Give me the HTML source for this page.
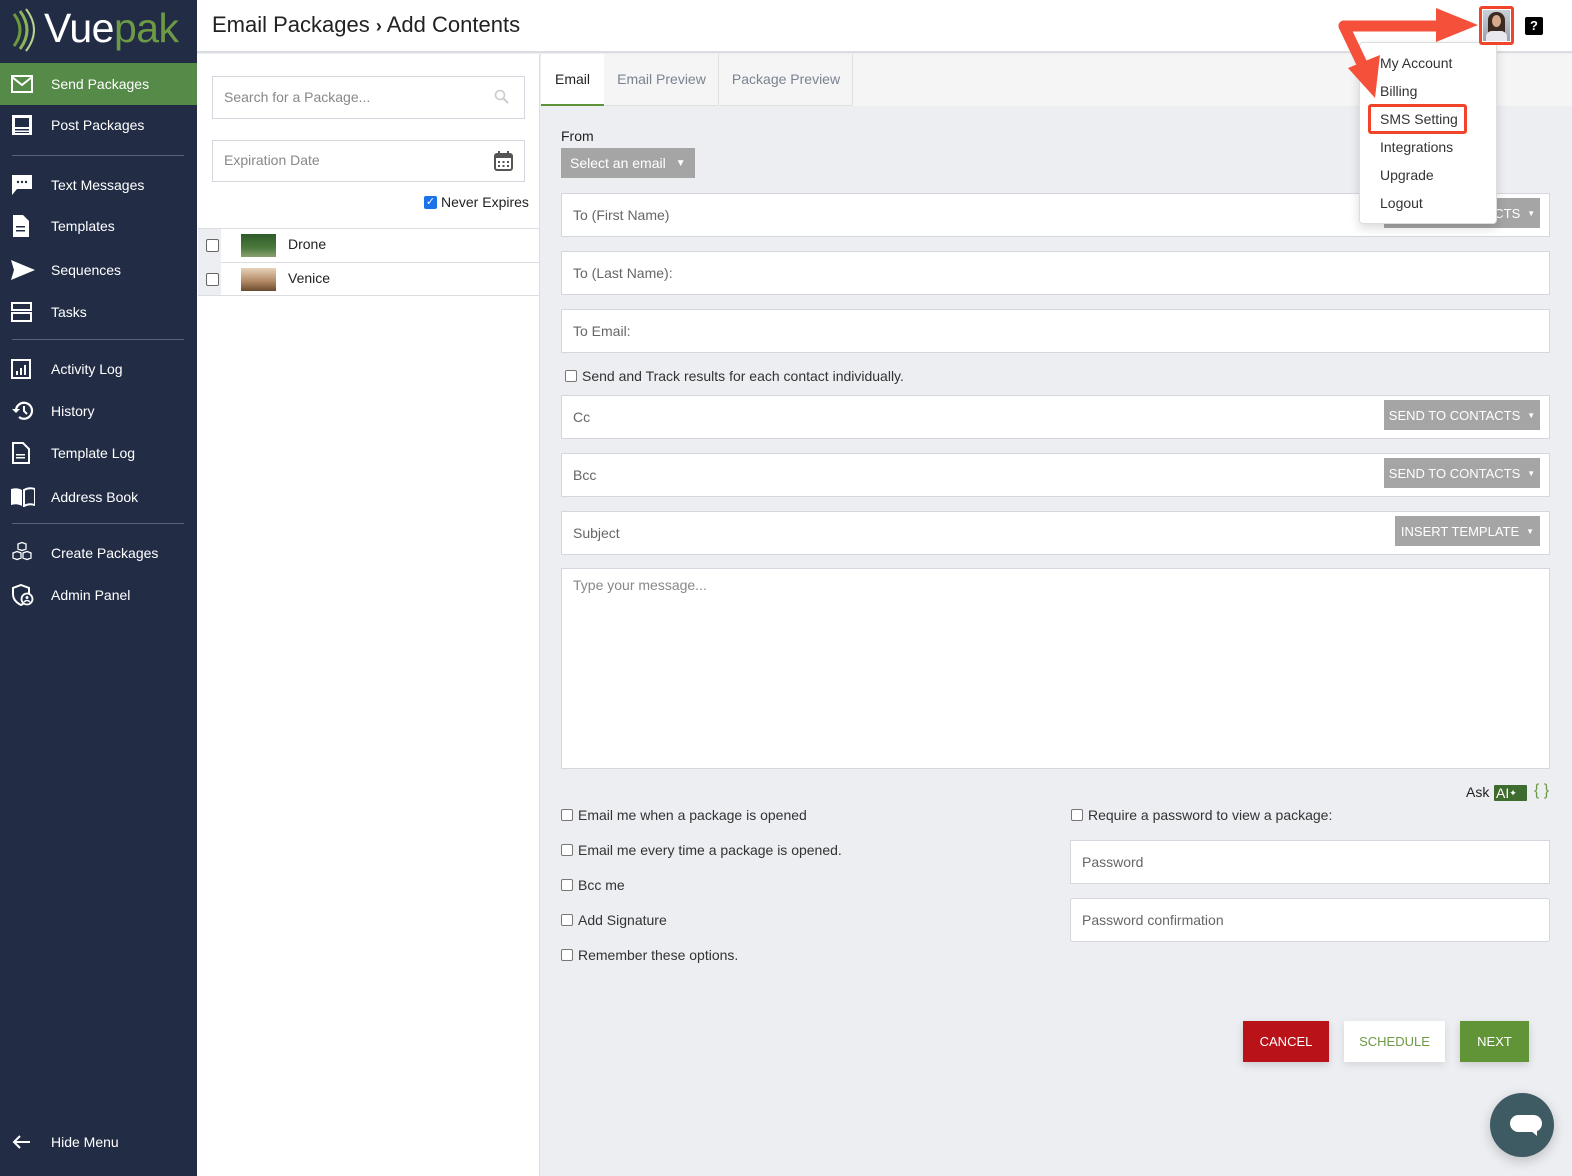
<!DOCTYPE html>
<html><head><meta charset="utf-8">
<style>
*{box-sizing:border-box;margin:0;padding:0}
body{width:1572px;height:1176px;overflow:hidden;font-family:"Liberation Sans",sans-serif;background:#eceef2;position:relative;color:#333;font-size:14px}
.abs{position:absolute}
#side{left:0;top:0;width:197px;height:1176px;background:#222d45;color:#fff}
.nav{position:absolute;left:0;width:197px;height:42px;display:flex;align-items:center;font-size:14px}
.nav span.t{position:absolute;left:51px}
.nav svg{position:absolute;left:11px}
.hr{position:absolute;left:12px;width:172px;height:1px;background:#59637a}
.field{position:absolute;left:561px;width:989px;height:44px;background:#fff;border:1px solid #d4d7dd;color:#666;font-size:14px;padding:0 11px;display:flex;align-items:center}
.gbtn{position:absolute;background:#a5a5a5;color:#fff;font-size:13px;display:flex;align-items:center;justify-content:center;height:30px}
.cb{display:inline-block;width:12px;height:12px;border:1px solid #777;border-radius:2px;background:#fff;vertical-align:-1px;margin-right:5px}
.opt{position:absolute;font-size:14px;color:#333}
.dd{position:absolute;left:1380px;font-size:14px;color:#333}
</style></head><body>
<div id="side" class="abs">
 <svg class="abs" style="left:10px;top:8px" width="30" height="44" viewBox="0 0 30 44"><path d="M4 6 Q16 22 4 38" stroke="#6c9a3c" stroke-width="3" fill="none"/><path d="M10 3 Q24 22 10 41" stroke="#8ab458" stroke-width="3" fill="none"/><path d="M16 1 Q32 22 16 43" stroke="#b8d190" stroke-width="2" fill="none"/></svg>
 <div class="abs" style="left:44px;top:4px;font-size:41px;line-height:48px;letter-spacing:-0.5px"><span style="color:#fff">Vue</span><span style="color:#6d9a45">pak</span></div>
 <div class="nav" style="top:63px;background:#568a48"><svg width="22" height="18" viewBox="0 0 22 18"><rect x="1" y="1" width="20" height="16" fill="none" stroke="#fff" stroke-width="2"/><path d="M1 2 L11 10 L21 2" stroke="#fff" stroke-width="2" fill="none"/></svg><span class="t">Send Packages</span></div>
 <div class="nav" style="top:104px"><svg width="22" height="22" viewBox="0 0 22 22"><rect x="1" y="1" width="20" height="20" fill="#fff"/><rect x="4" y="4" width="14" height="9" fill="#222d45"/><rect x="4" y="15" width="14" height="1.5" fill="#222d45"/><rect x="4" y="18" width="14" height="1" fill="#222d45"/></svg><span class="t">Post Packages</span></div>
 <div class="hr" style="top:155px"></div>
 <div class="nav" style="top:164px"><svg width="22" height="22" viewBox="0 0 22 22"><path d="M1 1 H21 V15 H6 L1 21 Z" fill="#fff"/><circle cx="7" cy="8" r="1.2" fill="#222d45"/><circle cx="11" cy="8" r="1.2" fill="#222d45"/><circle cx="15" cy="8" r="1.2" fill="#222d45"/></svg><span class="t">Text Messages</span></div>
 <div class="nav" style="top:205px"><svg width="22" height="22" viewBox="0 0 22 22"><path d="M2 0 H12 L18 6 V22 H2 Z" fill="#fff"/><rect x="5" y="11" width="9" height="1.5" fill="#222d45"/><rect x="5" y="15" width="9" height="1.5" fill="#222d45"/></svg><span class="t">Templates</span></div>
 <div class="nav" style="top:249px"><svg width="24" height="20" viewBox="0 0 24 20"><path d="M0 0 L24 10 L0 20 L3 10 Z" fill="#fff"/></svg><span class="t">Sequences</span></div>
 <div class="nav" style="top:291px"><svg width="22" height="20" viewBox="0 0 22 20"><rect x="1" y="1" width="19" height="7" fill="none" stroke="#fff" stroke-width="2"/><rect x="1" y="11" width="19" height="8" fill="none" stroke="#fff" stroke-width="2"/></svg><span class="t">Tasks</span></div>
 <div class="hr" style="top:339px"></div>
 <div class="nav" style="top:348px"><svg width="22" height="20" viewBox="0 0 22 20"><rect x="1" y="1" width="18" height="18" fill="none" stroke="#fff" stroke-width="2"/><rect x="5" y="12" width="2" height="4" fill="#fff"/><rect x="9" y="9" width="2" height="7" fill="#fff"/><rect x="13" y="6" width="2" height="10" fill="#fff"/></svg><span class="t">Activity Log</span></div>
 <div class="nav" style="top:390px"><svg width="24" height="22" viewBox="0 0 24 22"><path d="M5 11 A8 8 0 1 1 8 17" stroke="#fff" stroke-width="2.2" fill="none"/><path d="M1 9 L5 13 L9 9" fill="#fff"/><path d="M13 6 V11 L16 14" stroke="#fff" stroke-width="2" fill="none"/></svg><span class="t">History</span></div>
 <div class="nav" style="top:432px"><svg width="22" height="22" viewBox="0 0 22 22"><path d="M2 1 H12 L18 7 V21 H2 Z" fill="none" stroke="#fff" stroke-width="2"/><rect x="5" y="12" width="9" height="1.5" fill="#fff"/><rect x="5" y="15" width="9" height="1.5" fill="#fff"/></svg><span class="t">Template Log</span></div>
 <div class="nav" style="top:476px"><svg width="24" height="20" viewBox="0 0 24 20"><path d="M0 2 Q6 0 11 3 V19 Q6 16 0 18 Z" fill="#fff"/><path d="M13 3 Q18 0 24 2 V18 Q18 16 13 19 Z" fill="none" stroke="#fff" stroke-width="2"/></svg><span class="t">Address Book</span></div>
 <div class="hr" style="top:523px"></div>
 <div class="nav" style="top:532px"><svg width="22" height="22" viewBox="0 0 22 22" fill="none" stroke="#fff" stroke-width="1.3"><path d="M7 2 L11 0.5 L15 2 V7 L11 8.5 L7 7Z M2 11 L6 9.5 L10 11 V16 L6 17.5 L2 16Z M12 11 L16 9.5 L20 11 V16 L16 17.5 L12 16Z"/></svg><span class="t">Create Packages</span></div>
 <div class="nav" style="top:574px"><svg width="24" height="22" viewBox="0 0 24 22"><path d="M10 1 L18 4 V10 Q18 17 10 21 Q2 17 2 10 V4Z" fill="none" stroke="#fff" stroke-width="2"/><circle cx="16" cy="15" r="5.5" fill="#222d45" stroke="#fff" stroke-width="1.8"/><circle cx="16" cy="13.5" r="1.5" fill="#fff"/><path d="M13 18 Q16 15 19 18" stroke="#fff" fill="none" stroke-width="1.5"/></svg><span class="t">Admin Panel</span></div>
 <div class="nav" style="top:1121px"><svg width="20" height="16" viewBox="0 0 20 16"><path d="M19 8 H3 M9 2 L3 8 L9 14" stroke="#fff" stroke-width="2" fill="none"/></svg><span class="t">Hide Menu</span></div>
</div>

<div class="abs" style="left:197px;top:0;width:1375px;height:53px;background:#fff;border-bottom:2px solid #dcdde0"></div>
<div class="abs" style="left:212px;top:12px;font-size:22px;color:#222">Email Packages <span style="font-weight:bold;font-size:18px">›</span> Add Contents</div>

<div class="abs" style="left:197px;top:54px;width:343px;height:1122px;background:#fff;border-right:1px solid #dcdde0"></div>
<div class="abs" style="left:212px;top:76px;width:313px;height:43px;border:1px solid #d4d7dd;color:#888;padding:12px 11px;font-size:14px">Search for a Package...</div>
<svg class="abs" style="left:494px;top:89px" width="16" height="16" viewBox="0 0 16 16"><circle cx="6" cy="6" r="4.5" stroke="#ccc" stroke-width="1.6" fill="none"/><path d="M9.5 9.5 L14 14" stroke="#ccc" stroke-width="2"/></svg>
<div class="abs" style="left:212px;top:140px;width:313px;height:42px;border:1px solid #d4d7dd;color:#888;padding:11px 11px;font-size:14px">Expiration Date</div>
<svg class="abs" style="left:494px;top:151px" width="19" height="20" viewBox="0 0 19 20"><rect x="1" y="3" width="17" height="16" rx="2" fill="none" stroke="#555" stroke-width="2"/><rect x="1" y="3" width="17" height="4" fill="#555"/><rect x="4" y="0" width="2" height="4" fill="#555"/><rect x="13" y="0" width="2" height="4" fill="#555"/><g fill="#555"><rect x="4" y="10" width="2" height="2"/><rect x="8.5" y="10" width="2" height="2"/><rect x="13" y="10" width="2" height="2"/><rect x="4" y="14" width="2" height="2"/><rect x="8.5" y="14" width="2" height="2"/><rect x="13" y="14" width="2" height="2"/></g></svg>
<div class="abs" style="left:424px;top:196px;width:13px;height:13px;background:#1a73e8;border-radius:2px;color:#fff;font-size:11px;line-height:13px;text-align:center">✓</div>
<div class="abs" style="left:441px;top:194px;font-size:14px;color:#222">Never Expires</div>
<div class="abs" style="left:198px;top:228px;width:342px;height:68px;border-top:1px solid #dcdde0;border-bottom:1px solid #dcdde0"></div>
<div class="abs" style="left:198px;top:262px;width:342px;height:1px;background:#dcdde0"></div>
<div class="abs" style="left:198px;top:229px;width:23px;height:66px;background:#eceef2"></div>
<div class="abs" style="left:206px;top:239px;width:13px;height:13px;border:1px solid #666;border-radius:2px;background:#fff"></div>
<div class="abs" style="left:206px;top:273px;width:13px;height:13px;border:1px solid #666;border-radius:2px;background:#fff"></div>
<div class="abs" style="left:241px;top:234px;width:35px;height:23px;background:linear-gradient(#2f5a2a,#4b7a3c 60%,#8aa070)"></div>
<div class="abs" style="left:241px;top:268px;width:35px;height:23px;background:linear-gradient(#e7d3b8,#b08662 60%,#6a4a30)"></div>
<div class="abs" style="left:288px;top:236px;font-size:14px;color:#222">Drone</div>
<div class="abs" style="left:288px;top:270px;font-size:14px;color:#222">Venice</div>

<div class="abs" style="left:541px;top:54px;width:1031px;height:52px;background:#f5f5f6"></div>
<div class="abs" style="left:541px;top:54px;width:63px;height:52px;background:#fff;border-bottom:2px solid #5f9238;font-size:14px;color:#222;padding-top:17px;text-align:center">Email</div>
<div class="abs" style="left:605px;top:54px;width:114px;height:52px;border-right:1px solid #e0e0e0;border-bottom:1px solid #e0e0e0;font-size:14px;color:#7a8290;padding-top:17px;text-align:center">Email Preview</div>
<div class="abs" style="left:720px;top:54px;width:133px;height:52px;border-right:1px solid #e0e0e0;border-bottom:1px solid #e0e0e0;font-size:14px;color:#7a8290;padding-top:17px;text-align:center">Package Preview</div>

<div class="abs" style="left:561px;top:128px;font-size:14px;color:#222">From</div>
<div class="gbtn" style="left:561px;top:148px;width:134px;font-size:14px;justify-content:flex-start;padding-left:9px">Select an email <span style="margin-left:10px;font-size:10px">▼</span></div>

<div class="field" style="top:193px">To (First Name)</div>
<div class="field" style="top:251px">To (Last Name):</div>
<div class="field" style="top:309px">To Email:</div>
<div class="opt" style="left:565px;top:368px"><span class="cb"></span>Send and Track results for each contact individually.</div>
<div class="field" style="top:395px">Cc</div>
<div class="field" style="top:453px">Bcc</div>
<div class="field" style="top:511px">Subject</div>
<div class="gbtn" style="left:1384px;top:198px;width:156px">SEND TO CONTACTS <span style="margin-left:7px;font-size:8px">▼</span></div>
<div class="gbtn" style="left:1384px;top:400px;width:156px">SEND TO CONTACTS <span style="margin-left:7px;font-size:8px">▼</span></div>
<div class="gbtn" style="left:1384px;top:458px;width:156px">SEND TO CONTACTS <span style="margin-left:7px;font-size:8px">▼</span></div>
<div class="gbtn" style="left:1395px;top:516px;width:145px">INSERT TEMPLATE <span style="margin-left:7px;font-size:8px">▼</span></div>
<div class="field" style="top:568px;height:201px;align-items:flex-start;padding-top:8px;color:#888">Type your message...</div>

<div class="abs" style="left:1466px;top:784px;font-size:14px;color:#222">Ask</div>
<div class="abs" style="left:1494px;top:785px;width:33px;height:16px;background:#3e6b2e;color:#fff;font-size:14px;line-height:16px;padding-left:2px;border-radius:1px">AI<span style="font-size:9px;vertical-align:top">✦</span></div>
<div class="abs" style="left:1534px;top:782px;font-size:16px;color:#6d9a45">{ }</div>

<div class="opt" style="left:561px;top:807px"><span class="cb"></span>Email me when a package is opened</div>
<div class="opt" style="left:561px;top:842px"><span class="cb"></span>Email me every time a package is opened.</div>
<div class="opt" style="left:561px;top:877px"><span class="cb"></span>Bcc me</div>
<div class="opt" style="left:561px;top:912px"><span class="cb"></span>Add Signature</div>
<div class="opt" style="left:561px;top:947px"><span class="cb"></span>Remember these options.</div>
<div class="opt" style="left:1071px;top:807px"><span class="cb"></span>Require a password to view a package:</div>
<div class="field" style="left:1070px;width:480px;top:840px">Password</div>
<div class="field" style="left:1070px;width:480px;top:898px;border-radius:3px">Password confirmation</div>

<div class="abs" style="left:1243px;top:1021px;width:86px;height:41px;background:#b91219;color:#fff;font-size:13px;line-height:41px;text-align:center;box-shadow:0 3px 8px rgba(0,0,0,.15)">CANCEL</div>
<div class="abs" style="left:1344px;top:1021px;width:101px;height:41px;background:#fff;color:#6d9a45;font-size:13px;line-height:41px;text-align:center;box-shadow:0 3px 8px rgba(0,0,0,.1)">SCHEDULE</div>
<div class="abs" style="left:1460px;top:1021px;width:69px;height:41px;background:#619436;color:#fff;font-size:13px;line-height:41px;text-align:center;box-shadow:0 3px 8px rgba(0,0,0,.15)">NEXT</div>
<div class="abs" style="left:1490px;top:1093px;width:64px;height:64px;border-radius:50%;background:#3e5a63;box-shadow:0 4px 12px rgba(0,0,0,.2)"></div>
<div class="abs" style="left:1510px;top:1115px;width:32px;height:17px;border-radius:9px;background:#fff"></div>
<svg class="abs" style="left:1530px;top:1130px" width="8" height="7"><path d="M0 0 H7 V6Z" fill="#fff"/></svg>

<div class="abs" style="left:1359px;top:42px;width:138px;height:182px;background:#fff;border:1px solid #ddd;border-radius:4px;box-shadow:0 4px 10px rgba(0,0,0,.15)"></div>
<div class="dd" style="top:55px">My Account</div>
<div class="dd" style="top:83px">Billing</div>
<div class="abs" style="left:1368px;top:104px;width:99px;height:30px;border:3px solid #f0442b;border-radius:3px"></div>
<div class="dd" style="top:111px">SMS Setting</div>
<div class="dd" style="top:139px">Integrations</div>
<div class="dd" style="top:167px">Upgrade</div>
<div class="dd" style="top:195px">Logout</div>

<svg class="abs" style="left:1330px;top:0" width="160" height="110" viewBox="0 0 160 110">
<path d="M14 26 H110" stroke="#f5513a" stroke-width="11" fill="none" stroke-linecap="round"/>
<polygon points="106,8 148,25 106,42" fill="#f5513a"/>
<path d="M14 26 L34 68" stroke="#f5513a" stroke-width="11" fill="none" stroke-linecap="round"/>
<polygon points="18,68 50,55 45,98" fill="#f5513a"/>
</svg>
<div class="abs" style="left:1479px;top:6px;width:35px;height:39px;border:3px solid #f0442b;border-radius:3px;background:#fff"></div>
<div class="abs" style="left:1483px;top:10px;width:27px;height:31px;background:linear-gradient(#c9d0d8,#9aa4ae)"></div>
<div class="abs" style="left:1488px;top:12px;width:17px;height:27px;border-radius:8px 8px 2px 2px;background:#3a2a22"></div>
<div class="abs" style="left:1492px;top:15px;width:9px;height:12px;border-radius:50%;background:#d7a98a"></div>
<div class="abs" style="left:1486px;top:31px;width:21px;height:10px;background:#e8e8ee;border-radius:6px 6px 0 0"></div>
<div class="abs" style="left:1525px;top:17px;width:18px;height:18px;background:#000;color:#fff;font-weight:bold;font-size:13px;line-height:18px;text-align:center;border-radius:2px">?</div>
</body></html>
